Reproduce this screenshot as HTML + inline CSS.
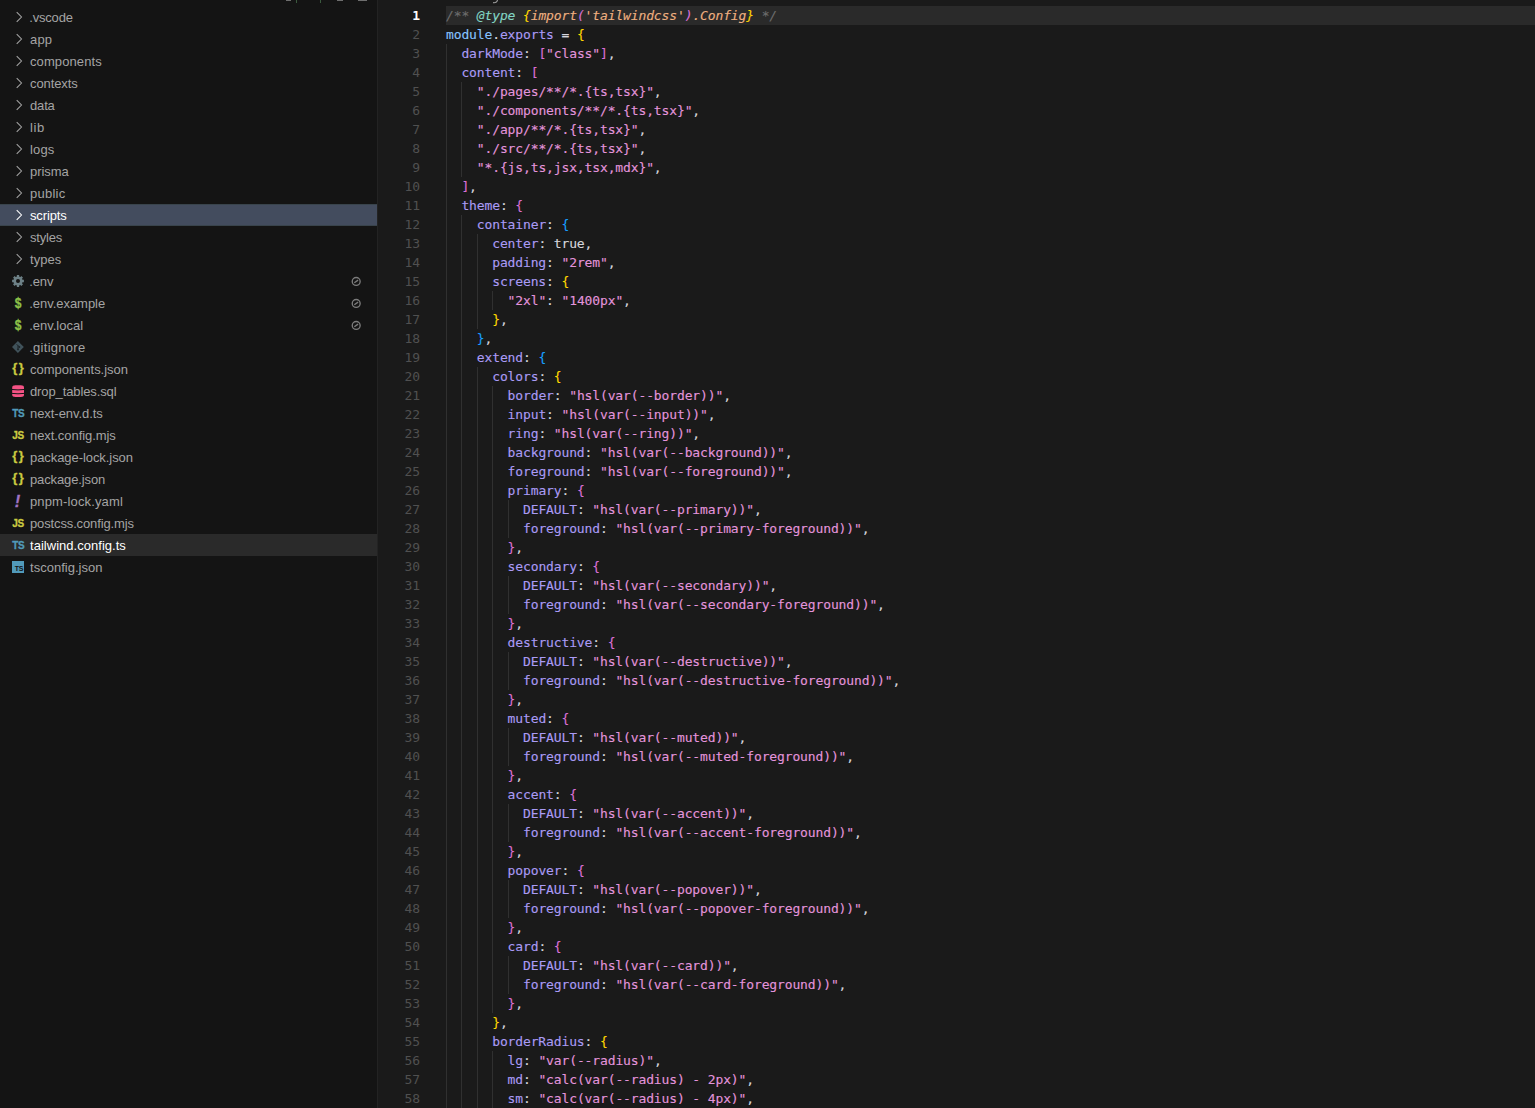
<!DOCTYPE html>
<html lang="en">
<head>
<meta charset="utf-8">
<title>tailwind.config.ts</title>
<style>
*{box-sizing:border-box;margin:0;padding:0}
html,body{width:1535px;height:1108px;overflow:hidden;background:#1a1a1a}
body{position:relative;font-family:"Liberation Sans",sans-serif}
#side{position:absolute;left:0;top:0;width:378px;height:1108px;background:#141414;border-right:1px solid #232323;overflow:hidden}
.row{position:absolute;left:0;width:377px;height:22px;line-height:22px;font-size:13px;color:#a4a4a4;white-space:nowrap}
.row.sel{background:#434c5e;color:#fff;box-shadow:inset 0 1px #39444c,inset 0 -1px #39444c}
.row.act{background:#2a2a2a;color:#fff}
.lbl{position:absolute;left:30px;top:1px;height:22px}
.chev{position:absolute;left:11px;top:3px;width:16px;height:16px;fill:none;stroke:#a4a4a4;stroke-width:1.05}
.row.sel .chev{stroke:#fff}
.ic{position:absolute;left:10px;top:3px;width:16px;height:16px}
.ict{position:absolute;left:8px;top:0;width:20px;height:22px;text-align:center;font-weight:bold;font-size:10px;line-height:22px;letter-spacing:-0.2px;text-indent:-0.2px;-webkit-text-stroke:0.3px currentColor}
.tsq{position:absolute;left:12px;top:5px;width:12px;height:12px;background:#519aba;color:#141414;font-weight:bold;font-size:7.5px;line-height:8px;overflow:hidden}
.tsq span{position:absolute;right:1px;bottom:0;letter-spacing:-0.4px;font-size:7px}
.sl{position:absolute;left:349px;top:4px;width:14px;height:14px}
#ed{position:absolute;left:378px;top:0;width:1157px;height:1108px;background:#1a1a1a;overflow:hidden;font-family:"DejaVu Sans Mono","Liberation Mono",monospace}
#hl{position:absolute;left:68px;top:6px;width:1089px;height:19px;background:#2a2a2a}
.g{position:absolute;width:1px;background:#303030;display:block}
#nums{position:absolute;left:0;top:6px;width:41.9px;text-align:right;font-size:13px;line-height:19px;color:#505050;letter-spacing:-0.129px}
#nums div{height:19px}
#nums .a{color:#fff;font-weight:bold}
#code{position:absolute;left:68px;top:6px;font-family:"DejaVu Sans Mono","Liberation Mono",monospace;font-size:13px;line-height:19px;letter-spacing:-0.129px;color:#d6d6dd;white-space:pre;-webkit-text-stroke:0.12px currentColor}
#code .l{display:inline-block;height:19px}
.cm{font-style:italic}
.cg{color:#6d6d6d}
.ty{color:#83d6c5}
.im{color:#efb080}
.b1{color:#ffd700}.b2{color:#da70d6}.b3{color:#179fff}
.m{color:#87c3ff}
.k{color:#aa9bf5}
.c{color:#d6d6dd}
.p{color:#d6d6dd}
.t{color:#d6d6dd}
.s{color:#e394dc}
.tb{position:absolute;display:block}
</style>
</head>
<body>
<div id="side">
<i class="tb" style="left:286px;top:0;width:5px;height:1px;background:#6e6e6e"></i><i class="tb" style="left:296px;top:0;width:1px;height:3px;background:#3a5a3e"></i><i class="tb" style="left:320px;top:0;width:1px;height:3px;background:#3a5a3e"></i><i class="tb" style="left:337px;top:0;width:6px;height:1px;background:#6e6e6e"></i><i class="tb" style="left:358px;top:0;width:9px;height:1px;background:#6e6e6e"></i>
<div class="row" style="top:6px"><svg class="chev" viewBox="0 0 16 16"><path d="M5.7 3.2 L10.5 8 L5.7 12.8" /></svg><span class="lbl" style="letter-spacing:-0.183px;margin-left:-0.8px">.vscode</span></div>
<div class="row" style="top:28px"><svg class="chev" viewBox="0 0 16 16"><path d="M5.7 3.2 L10.5 8 L5.7 12.8" /></svg><span class="lbl" style="letter-spacing:0.150px">app</span></div>
<div class="row" style="top:50px"><svg class="chev" viewBox="0 0 16 16"><path d="M5.7 3.2 L10.5 8 L5.7 12.8" /></svg><span class="lbl" style="letter-spacing:0.100px">components</span></div>
<div class="row" style="top:72px"><svg class="chev" viewBox="0 0 16 16"><path d="M5.7 3.2 L10.5 8 L5.7 12.8" /></svg><span class="lbl" style="letter-spacing:-0.100px">contexts</span></div>
<div class="row" style="top:94px"><svg class="chev" viewBox="0 0 16 16"><path d="M5.7 3.2 L10.5 8 L5.7 12.8" /></svg><span class="lbl" style="letter-spacing:-0.167px">data</span></div>
<div class="row" style="top:116px"><svg class="chev" viewBox="0 0 16 16"><path d="M5.7 3.2 L10.5 8 L5.7 12.8" /></svg><span class="lbl" style="letter-spacing:0.600px">lib</span></div>
<div class="row" style="top:138px"><svg class="chev" viewBox="0 0 16 16"><path d="M5.7 3.2 L10.5 8 L5.7 12.8" /></svg><span class="lbl" style="letter-spacing:0.167px">logs</span></div>
<div class="row" style="top:160px"><svg class="chev" viewBox="0 0 16 16"><path d="M5.7 3.2 L10.5 8 L5.7 12.8" /></svg><span class="lbl" style="letter-spacing:-0.080px">prisma</span></div>
<div class="row" style="top:182px"><svg class="chev" viewBox="0 0 16 16"><path d="M5.7 3.2 L10.5 8 L5.7 12.8" /></svg><span class="lbl" style="letter-spacing:0.260px">public</span></div>
<div class="row sel" style="top:204px"><svg class="chev" viewBox="0 0 16 16"><path d="M5.7 3.2 L10.5 8 L5.7 12.8" /></svg><span class="lbl" style="letter-spacing:-0.133px">scripts</span></div>
<div class="row" style="top:226px"><svg class="chev" viewBox="0 0 16 16"><path d="M5.7 3.2 L10.5 8 L5.7 12.8" /></svg><span class="lbl" style="letter-spacing:-0.200px">styles</span></div>
<div class="row" style="top:248px"><svg class="chev" viewBox="0 0 16 16"><path d="M5.7 3.2 L10.5 8 L5.7 12.8" /></svg><span class="lbl" style="letter-spacing:0.050px">types</span></div>
<div class="row" style="top:270px"><svg class="ic" viewBox="0 0 16 16"><g stroke="#6d8086" stroke-width="2.3"><path d="M8 2.1v11.8M2.1 8h11.8M3.83 3.83l8.34 8.34M12.17 3.83l-8.34 8.34"/></g><circle cx="8" cy="8" r="3.3" fill="none" stroke="#6d8086" stroke-width="2.6"/><circle cx="8" cy="8" r="2" fill="#141414"/></svg><span class="lbl" style="letter-spacing:-0.100px;margin-left:-0.8px">.env</span><svg class="sl" viewBox="0 0 14 14"><circle cx="7.2" cy="7.45" r="3.95" fill="none" stroke="#7c7c7c" stroke-width="1.35"/><path d="M5.3 8.75L9.1 6.15" stroke="#7c7c7c" stroke-width="1.35"/></svg></div>
<div class="row" style="top:292px"><span class="ict" style="color:#8dc149;font-size:14px;transform:scaleX(0.86);left:8.2px">$</span><span class="lbl" style="letter-spacing:-0.036px;margin-left:-0.8px">.env.example</span><svg class="sl" viewBox="0 0 14 14"><circle cx="7.2" cy="7.45" r="3.95" fill="none" stroke="#7c7c7c" stroke-width="1.35"/><path d="M5.3 8.75L9.1 6.15" stroke="#7c7c7c" stroke-width="1.35"/></svg></div>
<div class="row" style="top:314px"><span class="ict" style="color:#8dc149;font-size:14px;transform:scaleX(0.86);left:8.2px">$</span><span class="lbl" style="letter-spacing:-0.011px;margin-left:-0.8px">.env.local</span><svg class="sl" viewBox="0 0 14 14"><circle cx="7.2" cy="7.45" r="3.95" fill="none" stroke="#7c7c7c" stroke-width="1.35"/><path d="M5.3 8.75L9.1 6.15" stroke="#7c7c7c" stroke-width="1.35"/></svg></div>
<div class="row" style="top:336px"><svg class="ic" viewBox="0 0 16 16"><path d="M7.9 2.1 L13.8 8 L7.9 13.9 L2 8Z" fill="#41535b"/><path d="M6.6 5.2l2.6 2.6M8 6.6v3.8" stroke="#1c2529" stroke-width="1" fill="none"/><circle cx="9.4" cy="8" r="0.9" fill="#1c2529"/><circle cx="8" cy="10.4" r="0.9" fill="#1c2529"/></svg><span class="lbl" style="letter-spacing:0.278px;margin-left:-0.8px">.gitignore</span></div>
<div class="row" style="top:358px"><span class="ict" style="color:#cbcb41;font-size:13px;letter-spacing:1.4px;text-indent:1.6px;top:-1px">{}</span><span class="lbl" style="letter-spacing:-0.021px">components.json</span></div>
<div class="row" style="top:380px"><svg class="ic" viewBox="0 0 16 16"><rect x="2.2" y="2.2" width="11.8" height="11.7" rx="3.2" ry="2.2" fill="#f55385"/><path d="M2 6.5 Q8 7.3 14 6.5 M2 10.4 Q8 11.2 14 10.4" stroke="#141414" stroke-width="1" fill="none"/></svg><span class="lbl" style="letter-spacing:-0.114px">drop_tables.sql</span></div>
<div class="row" style="top:402px"><span class="ict" style="color:#519aba;top:1px;left:8.5px">TS</span><span class="lbl" style="letter-spacing:-0.050px">next-env.d.ts</span></div>
<div class="row" style="top:424px"><span class="ict" style="color:#cbcb41;top:1px;left:8.2px">JS</span><span class="lbl" style="letter-spacing:-0.064px">next.config.mjs</span></div>
<div class="row" style="top:446px"><span class="ict" style="color:#cbcb41;font-size:13px;letter-spacing:1.4px;text-indent:1.6px;top:-1px">{}</span><span class="lbl" style="letter-spacing:-0.069px">package-lock.json</span></div>
<div class="row" style="top:468px"><span class="ict" style="color:#cbcb41;font-size:13px;letter-spacing:1.4px;text-indent:1.6px;top:-1px">{}</span><span class="lbl" style="letter-spacing:-0.127px">package.json</span></div>
<div class="row" style="top:490px"><span class="ict" style="color:#a074c4;font-size:16.5px;font-style:italic;left:7.6px">!</span><span class="lbl" style="letter-spacing:0.138px">pnpm-lock.yaml</span></div>
<div class="row" style="top:512px"><span class="ict" style="color:#cbcb41;top:1px;left:8.2px">JS</span><span class="lbl" style="letter-spacing:-0.135px">postcss.config.mjs</span></div>
<div class="row act" style="top:534px"><span class="ict" style="color:#519aba;top:1px;left:8.5px">TS</span><span class="lbl" style="letter-spacing:0.029px">tailwind.config.ts</span></div>
<div class="row" style="top:556px"><span class="tsq"><span>TS</span></span><span class="lbl" style="letter-spacing:0.017px">tsconfig.json</span></div>
</div>
<div id="ed">
<svg class="tb" style="left:114px;top:0;width:8px;height:4px" viewBox="0 0 8 4"><path d="M1 2.6 Q5.4 3.2 5.6 -1" fill="none" stroke="#9a9a9a" stroke-width="1.1"/></svg>
<div id="hl"></div>
<i class="g" style="left:68px;top:44px;height:1104px"></i><i class="g" style="left:83px;top:82px;height:95px"></i><i class="g" style="left:83px;top:215px;height:933px"></i><i class="g" style="left:99px;top:234px;height:95px"></i><i class="g" style="left:99px;top:367px;height:781px"></i><i class="g" style="left:114px;top:291px;height:19px"></i><i class="g" style="left:114px;top:386px;height:627px"></i><i class="g" style="left:114px;top:1051px;height:97px"></i><i class="g" style="left:130px;top:500px;height:38px"></i><i class="g" style="left:130px;top:576px;height:38px"></i><i class="g" style="left:130px;top:652px;height:38px"></i><i class="g" style="left:130px;top:728px;height:38px"></i><i class="g" style="left:130px;top:804px;height:38px"></i><i class="g" style="left:130px;top:880px;height:38px"></i><i class="g" style="left:130px;top:956px;height:38px"></i>
<div id="nums"><div class="a">1</div><div>2</div><div>3</div><div>4</div><div>5</div><div>6</div><div>7</div><div>8</div><div>9</div><div>10</div><div>11</div><div>12</div><div>13</div><div>14</div><div>15</div><div>16</div><div>17</div><div>18</div><div>19</div><div>20</div><div>21</div><div>22</div><div>23</div><div>24</div><div>25</div><div>26</div><div>27</div><div>28</div><div>29</div><div>30</div><div>31</div><div>32</div><div>33</div><div>34</div><div>35</div><div>36</div><div>37</div><div>38</div><div>39</div><div>40</div><div>41</div><div>42</div><div>43</div><div>44</div><div>45</div><div>46</div><div>47</div><div>48</div><div>49</div><div>50</div><div>51</div><div>52</div><div>53</div><div>54</div><div>55</div><div>56</div><div>57</div><div>58</div></div>
<pre id="code"><span class="l cm"><span class="cg">/**</span> <span class="ty">@type</span> <span class="b1">{</span><span class="im">import</span><span class="b2">(</span><span class="im">'tailwindcss'</span><span class="b2">)</span><span class="im">.Config</span><span class="b1">}</span> <span class="cg">*/</span></span>
<span class="l"><span class="m">module</span><span class="p">.</span><span class="k">exports</span> <span class="p">=</span> <span class="b1">{</span></span>
<span class="l">  <span class="k">darkMode</span><span class="c">:</span> <span class="b2">[</span><span class="s">"class"</span><span class="b2">]</span><span class="p">,</span></span>
<span class="l">  <span class="k">content</span><span class="c">:</span> <span class="b2">[</span></span>
<span class="l">    <span class="s">"./pages/**/*.{ts,tsx}"</span><span class="p">,</span></span>
<span class="l">    <span class="s">"./components/**/*.{ts,tsx}"</span><span class="p">,</span></span>
<span class="l">    <span class="s">"./app/**/*.{ts,tsx}"</span><span class="p">,</span></span>
<span class="l">    <span class="s">"./src/**/*.{ts,tsx}"</span><span class="p">,</span></span>
<span class="l">    <span class="s">"*.{js,ts,jsx,tsx,mdx}"</span><span class="p">,</span></span>
<span class="l">  <span class="b2">]</span><span class="p">,</span></span>
<span class="l">  <span class="k">theme</span><span class="c">:</span> <span class="b2">{</span></span>
<span class="l">    <span class="k">container</span><span class="c">:</span> <span class="b3">{</span></span>
<span class="l">      <span class="k">center</span><span class="c">:</span> <span class="t">true</span><span class="p">,</span></span>
<span class="l">      <span class="k">padding</span><span class="c">:</span> <span class="s">"2rem"</span><span class="p">,</span></span>
<span class="l">      <span class="k">screens</span><span class="c">:</span> <span class="b1">{</span></span>
<span class="l">        <span class="s">"2xl"</span><span class="c">:</span> <span class="s">"1400px"</span><span class="p">,</span></span>
<span class="l">      <span class="b1">}</span><span class="p">,</span></span>
<span class="l">    <span class="b3">}</span><span class="p">,</span></span>
<span class="l">    <span class="k">extend</span><span class="c">:</span> <span class="b3">{</span></span>
<span class="l">      <span class="k">colors</span><span class="c">:</span> <span class="b1">{</span></span>
<span class="l">        <span class="k">border</span><span class="c">:</span> <span class="s">"hsl(var(--border))"</span><span class="p">,</span></span>
<span class="l">        <span class="k">input</span><span class="c">:</span> <span class="s">"hsl(var(--input))"</span><span class="p">,</span></span>
<span class="l">        <span class="k">ring</span><span class="c">:</span> <span class="s">"hsl(var(--ring))"</span><span class="p">,</span></span>
<span class="l">        <span class="k">background</span><span class="c">:</span> <span class="s">"hsl(var(--background))"</span><span class="p">,</span></span>
<span class="l">        <span class="k">foreground</span><span class="c">:</span> <span class="s">"hsl(var(--foreground))"</span><span class="p">,</span></span>
<span class="l">        <span class="k">primary</span><span class="c">:</span> <span class="b2">{</span></span>
<span class="l">          <span class="k">DEFAULT</span><span class="c">:</span> <span class="s">"hsl(var(--primary))"</span><span class="p">,</span></span>
<span class="l">          <span class="k">foreground</span><span class="c">:</span> <span class="s">"hsl(var(--primary-foreground))"</span><span class="p">,</span></span>
<span class="l">        <span class="b2">}</span><span class="p">,</span></span>
<span class="l">        <span class="k">secondary</span><span class="c">:</span> <span class="b2">{</span></span>
<span class="l">          <span class="k">DEFAULT</span><span class="c">:</span> <span class="s">"hsl(var(--secondary))"</span><span class="p">,</span></span>
<span class="l">          <span class="k">foreground</span><span class="c">:</span> <span class="s">"hsl(var(--secondary-foreground))"</span><span class="p">,</span></span>
<span class="l">        <span class="b2">}</span><span class="p">,</span></span>
<span class="l">        <span class="k">destructive</span><span class="c">:</span> <span class="b2">{</span></span>
<span class="l">          <span class="k">DEFAULT</span><span class="c">:</span> <span class="s">"hsl(var(--destructive))"</span><span class="p">,</span></span>
<span class="l">          <span class="k">foreground</span><span class="c">:</span> <span class="s">"hsl(var(--destructive-foreground))"</span><span class="p">,</span></span>
<span class="l">        <span class="b2">}</span><span class="p">,</span></span>
<span class="l">        <span class="k">muted</span><span class="c">:</span> <span class="b2">{</span></span>
<span class="l">          <span class="k">DEFAULT</span><span class="c">:</span> <span class="s">"hsl(var(--muted))"</span><span class="p">,</span></span>
<span class="l">          <span class="k">foreground</span><span class="c">:</span> <span class="s">"hsl(var(--muted-foreground))"</span><span class="p">,</span></span>
<span class="l">        <span class="b2">}</span><span class="p">,</span></span>
<span class="l">        <span class="k">accent</span><span class="c">:</span> <span class="b2">{</span></span>
<span class="l">          <span class="k">DEFAULT</span><span class="c">:</span> <span class="s">"hsl(var(--accent))"</span><span class="p">,</span></span>
<span class="l">          <span class="k">foreground</span><span class="c">:</span> <span class="s">"hsl(var(--accent-foreground))"</span><span class="p">,</span></span>
<span class="l">        <span class="b2">}</span><span class="p">,</span></span>
<span class="l">        <span class="k">popover</span><span class="c">:</span> <span class="b2">{</span></span>
<span class="l">          <span class="k">DEFAULT</span><span class="c">:</span> <span class="s">"hsl(var(--popover))"</span><span class="p">,</span></span>
<span class="l">          <span class="k">foreground</span><span class="c">:</span> <span class="s">"hsl(var(--popover-foreground))"</span><span class="p">,</span></span>
<span class="l">        <span class="b2">}</span><span class="p">,</span></span>
<span class="l">        <span class="k">card</span><span class="c">:</span> <span class="b2">{</span></span>
<span class="l">          <span class="k">DEFAULT</span><span class="c">:</span> <span class="s">"hsl(var(--card))"</span><span class="p">,</span></span>
<span class="l">          <span class="k">foreground</span><span class="c">:</span> <span class="s">"hsl(var(--card-foreground))"</span><span class="p">,</span></span>
<span class="l">        <span class="b2">}</span><span class="p">,</span></span>
<span class="l">      <span class="b1">}</span><span class="p">,</span></span>
<span class="l">      <span class="k">borderRadius</span><span class="c">:</span> <span class="b1">{</span></span>
<span class="l">        <span class="k">lg</span><span class="c">:</span> <span class="s">"var(--radius)"</span><span class="p">,</span></span>
<span class="l">        <span class="k">md</span><span class="c">:</span> <span class="s">"calc(var(--radius) - 2px)"</span><span class="p">,</span></span>
<span class="l">        <span class="k">sm</span><span class="c">:</span> <span class="s">"calc(var(--radius) - 4px)"</span><span class="p">,</span></span>
</pre>
</div>
</body>
</html>
